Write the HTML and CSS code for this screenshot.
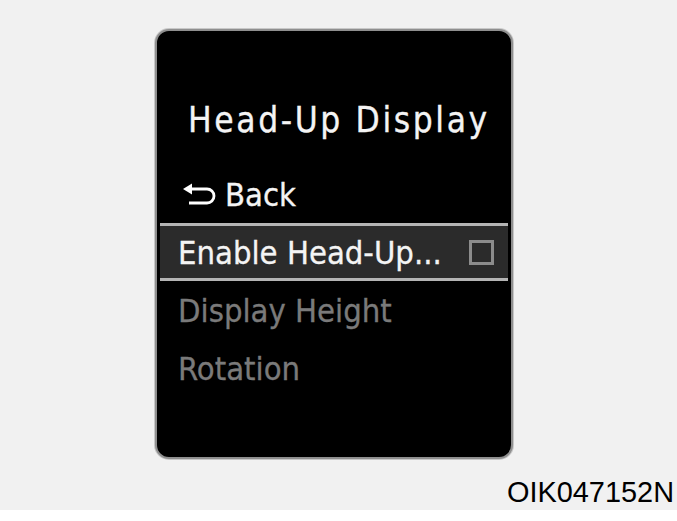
FILE: index.html
```html
<!DOCTYPE html>
<html lang="en">
<head>
    <meta charset="UTF-8">
    <meta name="viewport" content="width=device-width, initial-scale=1.0">
    <title>Head-Up Display</title>
    <link rel="stylesheet" href="styles.css">
</head>
<body>
    <div class="page">
        <div class="screen">
            <h1 class="screen-title">Head-Up Display</h1>
            <ul class="menu">
                <li class="menu-item">
                    <svg class="back-icon" width="36" height="22" viewBox="0 0 36 22" aria-hidden="true">
                        <path d="M10 0.5 L1 6 L10 11.5 Z" fill="#fff"/>
                        <path d="M6 6 H25 A7 7 0 0 1 25 20 H7" fill="none" stroke="#fff" stroke-width="2.8"/>
                    </svg>
                    <span>Back</span>
                </li>
                <li class="menu-item selected">
                    <span class="item-label">Enable Head-Up...</span>
                    <span class="checkbox"></span>
                </li>
                <li class="menu-item disabled">Display Height</li>
                <li class="menu-item disabled">Rotation</li>
            </ul>
        </div>
        <div class="caption">OIK047152N</div>
    </div>
</body>
</html>
```

FILE: styles.css
```css
:root {
    --page-bg: #f1f1f1;
    --screen-bg: #000000;
    --frame-color: #8f8f8f;
    --row-selected: #2b2b2b;
    --row-line: #b4b4b4;
    --text-on: #f4f4f4;
    --text-off: #7a7a7a;
}

body {
    margin: 0;
    background: #ffffff;
    font-family: "DejaVu Sans Condensed", "DejaVu Sans", sans-serif;
    font-stretch: condensed;
}

.page {
    background: var(--page-bg);
    height: 510px;
    padding-top: 29px;
    box-sizing: border-box;
}

.screen {
    margin-left: 155px;
    width: 358px;
    height: 430px;
    box-sizing: border-box;
    background: var(--screen-bg);
    border: 2px solid var(--frame-color);
    border-radius: 14px;
    box-shadow: 0 0 0 1px #c8c8c8;
}

.screen-title {
    margin: 69px 0 25px;
    padding-left: 31px;
    font-size: 35px;
    line-height: 40px;
    font-weight: normal;
    letter-spacing: 2.6px;
    color: var(--text-on);
    -webkit-text-stroke: 0.3px var(--text-on);
}

.menu {
    list-style: none;
    margin: 0 3px;
    padding: 0;
}

.menu-item {
    display: flex;
    align-items: center;
    height: 58px;
    box-sizing: border-box;
    border-top: 3px solid transparent;
    border-bottom: 3px solid transparent;
    padding: 2px 14px 0 18px;
    font-size: 32.5px;
    line-height: 50px;
    color: var(--text-on);
    -webkit-text-stroke: 0.3px currentColor;
}

.menu-item.selected {
    background: var(--row-selected);
    border-color: var(--row-line);
}

.menu-item.disabled {
    color: var(--text-off);
}

.back-icon {
    margin: -2px 7px 0 4px;
}

.item-label {
    flex: 1;
}

.checkbox {
    width: 25px;
    height: 25px;
    box-sizing: border-box;
    border: 3px solid #8c8c8c;
    margin-top: -2px;
}

.caption {
    margin-top: 17px;
    padding-right: 3px;
    text-align: right;
    font-family: "Liberation Sans", Arial, sans-serif;
    font-size: 28.9px;
    line-height: 32px;
    color: #000000;
}
```
